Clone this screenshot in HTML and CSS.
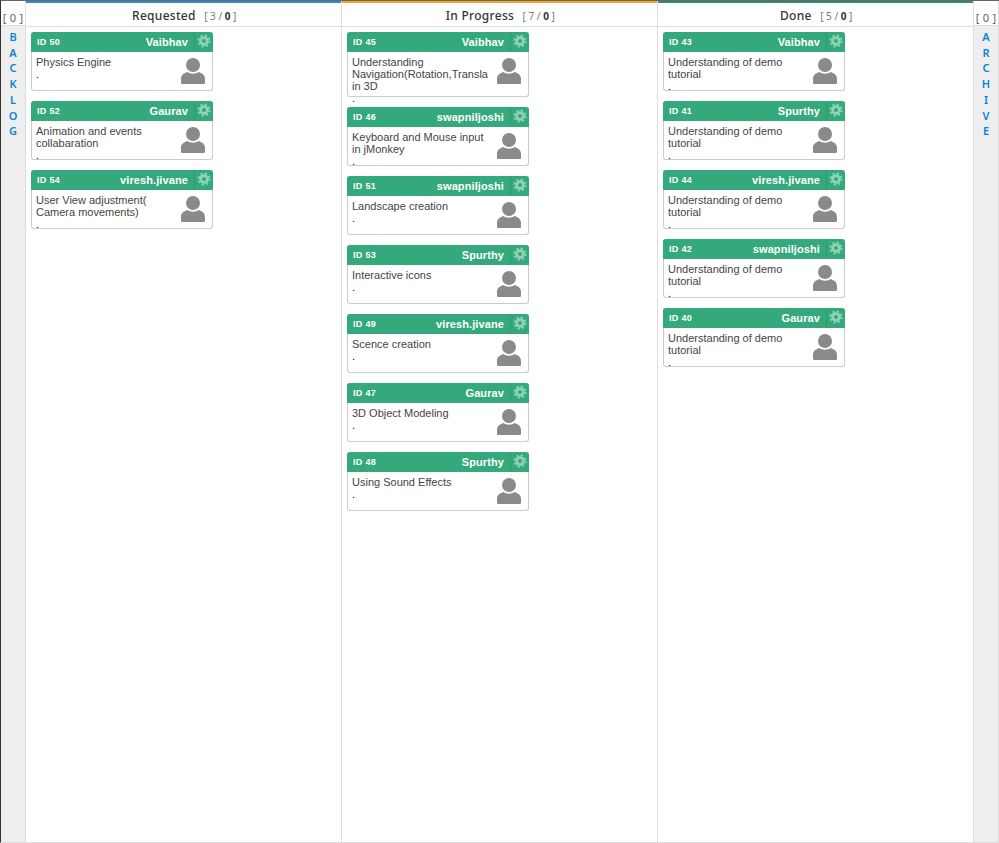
FILE: index.html
```html
<!DOCTYPE html>
<html>
<head>
    <title>Board</title>
    <link rel="stylesheet" href="styles.css">
</head>
<body>
    <svg class="defs" width="0" height="0">
        <symbol id="gear" viewBox="0 0 14 14">
            <circle cx="7" cy="7" r="3.4" fill="none" stroke="#8fd4b8" stroke-width="2.8"/>
            <circle cx="7" cy="7" r="5.6" fill="none" stroke="#8fd4b8" stroke-width="1.8" stroke-dasharray="2.2 2.2"/>
        </symbol>
        <symbol id="user" viewBox="0 0 24 26">
            <circle cx="12" cy="7" r="7" fill="#8a8a8a"/>
            <path d="M0 24.500v-4c0-3 2.500-5.200 6.500-6.500 2.500 2.300 8.500 2.300 11 0 4 1.300 6.500 3.500 6.500 6.500v4c0 1-.5 1.500-1.500 1.500h-21c-1 0-1.500-.5-1.500-1.500z" fill="#8a8a8a"/>
        </symbol>
    </svg>
    <div class="board">
        <div class="side">
            <div class="side-count">[ 0 ]</div>
            <a class="side-label">B A C K L O G</a>
        </div>

        <div class="lane">
            <div class="lane-head bar-blue">Requested <span class="count">[3/<b>0</b>]</span></div>
            <div class="lane-body">
                <div class="card">
                    <div class="card-head"><span class="id">ID 50</span><span class="name">Vaibhav</span><span class="cog"><svg><use href="#gear"/></svg></span></div>
                    <div class="card-body"><svg class="avatar"><use href="#user"/></svg><div class="title">Physics Engine</div><div class="note">.</div></div>
                </div>
                <div class="card">
                    <div class="card-head"><span class="id">ID 52</span><span class="name">Gaurav</span><span class="cog"><svg><use href="#gear"/></svg></span></div>
                    <div class="card-body"><svg class="avatar"><use href="#user"/></svg><div class="title">Animation and events collabaration</div><div class="note">.</div></div>
                </div>
                <div class="card">
                    <div class="card-head"><span class="id">ID 54</span><span class="name">viresh.jivane</span><span class="cog"><svg><use href="#gear"/></svg></span></div>
                    <div class="card-body"><svg class="avatar"><use href="#user"/></svg><div class="title">User View adjustment( Camera movements)</div><div class="note">.</div></div>
                </div>
            </div>
        </div>

        <div class="lane">
            <div class="lane-head bar-orange">In Progress <span class="count">[7/<b>0</b>]</span></div>
            <div class="lane-body">
                <div class="card">
                    <div class="card-head"><span class="id">ID 45</span><span class="name">Vaibhav</span><span class="cog"><svg><use href="#gear"/></svg></span></div>
                    <div class="card-body"><svg class="avatar"><use href="#user"/></svg><div class="title">Understanding Navigation(Rotation,Transla in 3D</div><div class="note">.</div></div>
                </div>
                <div class="card">
                    <div class="card-head"><span class="id">ID 46</span><span class="name">swapniljoshi</span><span class="cog"><svg><use href="#gear"/></svg></span></div>
                    <div class="card-body"><svg class="avatar"><use href="#user"/></svg><div class="title">Keyboard and Mouse input in jMonkey</div><div class="note">.</div></div>
                </div>
                <div class="card">
                    <div class="card-head"><span class="id">ID 51</span><span class="name">swapniljoshi</span><span class="cog"><svg><use href="#gear"/></svg></span></div>
                    <div class="card-body"><svg class="avatar"><use href="#user"/></svg><div class="title">Landscape creation</div><div class="note">.</div></div>
                </div>
                <div class="card">
                    <div class="card-head"><span class="id">ID 53</span><span class="name">Spurthy</span><span class="cog"><svg><use href="#gear"/></svg></span></div>
                    <div class="card-body"><svg class="avatar"><use href="#user"/></svg><div class="title">Interactive icons</div><div class="note">.</div></div>
                </div>
                <div class="card">
                    <div class="card-head"><span class="id">ID 49</span><span class="name">viresh.jivane</span><span class="cog"><svg><use href="#gear"/></svg></span></div>
                    <div class="card-body"><svg class="avatar"><use href="#user"/></svg><div class="title">Scence creation</div><div class="note">.</div></div>
                </div>
                <div class="card">
                    <div class="card-head"><span class="id">ID 47</span><span class="name">Gaurav</span><span class="cog"><svg><use href="#gear"/></svg></span></div>
                    <div class="card-body"><svg class="avatar"><use href="#user"/></svg><div class="title">3D Object Modeling</div><div class="note">.</div></div>
                </div>
                <div class="card">
                    <div class="card-head"><span class="id">ID 48</span><span class="name">Spurthy</span><span class="cog"><svg><use href="#gear"/></svg></span></div>
                    <div class="card-body"><svg class="avatar"><use href="#user"/></svg><div class="title">Using Sound Effects</div><div class="note">.</div></div>
                </div>
            </div>
        </div>

        <div class="lane">
            <div class="lane-head bar-green">Done <span class="count">[5/<b>0</b>]</span></div>
            <div class="lane-body">
                <div class="card">
                    <div class="card-head"><span class="id">ID 43</span><span class="name">Vaibhav</span><span class="cog"><svg><use href="#gear"/></svg></span></div>
                    <div class="card-body"><svg class="avatar"><use href="#user"/></svg><div class="title">Understanding of demo tutorial</div><div class="note">.</div></div>
                </div>
                <div class="card">
                    <div class="card-head"><span class="id">ID 41</span><span class="name">Spurthy</span><span class="cog"><svg><use href="#gear"/></svg></span></div>
                    <div class="card-body"><svg class="avatar"><use href="#user"/></svg><div class="title">Understanding of demo tutorial</div><div class="note">.</div></div>
                </div>
                <div class="card">
                    <div class="card-head"><span class="id">ID 44</span><span class="name">viresh.jivane</span><span class="cog"><svg><use href="#gear"/></svg></span></div>
                    <div class="card-body"><svg class="avatar"><use href="#user"/></svg><div class="title">Understanding of demo tutorial</div><div class="note">.</div></div>
                </div>
                <div class="card">
                    <div class="card-head"><span class="id">ID 42</span><span class="name">swapniljoshi</span><span class="cog"><svg><use href="#gear"/></svg></span></div>
                    <div class="card-body"><svg class="avatar"><use href="#user"/></svg><div class="title">Understanding of demo tutorial</div><div class="note">.</div></div>
                </div>
                <div class="card">
                    <div class="card-head"><span class="id">ID 40</span><span class="name">Gaurav</span><span class="cog"><svg><use href="#gear"/></svg></span></div>
                    <div class="card-body"><svg class="avatar"><use href="#user"/></svg><div class="title">Understanding of demo tutorial</div><div class="note">.</div></div>
                </div>
            </div>
        </div>

        <div class="side side-right">
            <div class="side-count">[ 0 ]</div>
            <a class="side-label">A R C H I V E</a>
        </div>
    </div>
</body>
</html>
```

FILE: styles.css
```css
html, body {
    margin: 0;
    padding: 0;
    height: 100%;
    background: #fff;
    overflow: hidden;
}
.defs {
    position: absolute;
}
.board {
    display: flex;
    width: 999px;
    height: 843px;
    box-sizing: border-box;
    border-top: 1px solid #666;
    border-left: 1px solid #333;
    border-bottom: 1px solid #ddd;
    font-family: "Liberation Sans", Arial, sans-serif;
}
.side {
    width: 25px;
    flex: none;
    background: #eee;
    border-right: 1px solid #ddd;
    box-sizing: border-box;
    text-align: center;
}
.side-right {
    border-left: 1px solid #ddd;
    width: 26px;
}
.side-count {
    height: 25px;
    box-sizing: border-box;
    padding-top: 10px;
    background: #fff;
    border-bottom: 1px solid #ddd;
    font: 11px/14px "Noto Sans", sans-serif;
    letter-spacing: 0.3px;
    color: #666;
    white-space: nowrap;
}
.side-label {
    display: block;
    width: 10px;
    margin: 3px auto 0;
    font: 600 11px/15.7px "Noto Sans", sans-serif;
    color: #0a84d6;
}
.lane {
    width: 316px;
    flex: none;
    box-sizing: border-box;
    border-right: 1px solid #ddd;
}
.lane:nth-of-type(4) {
    border-right: 0;
    width: 315px;
}
.lane-head {
    height: 26px;
    box-sizing: border-box;
    padding-left: 4px;
    border-top: 2px solid #2a8fcb;
    border-bottom: 1px solid #ddd;
    text-align: center;
    font: 500 12px/25px "Noto Sans", sans-serif;
    letter-spacing: 0.3px;
    color: #333;
}
.bar-blue {
    border-top-color: #2a8fcb;
}
.bar-orange {
    border-top-color: #f5a623;
}
.bar-green {
    border-top-color: #2f8f76;
}
.count {
    margin-left: 5px;
    font-size: 10px;
    font-weight: 400;
    letter-spacing: 2.6px;
    color: #777;
}
.count b {
    color: #333;
}
.lane-body {
    padding: 5px;
}
.card {
    width: 182px;
    margin-bottom: 10px;
    box-sizing: border-box;
    border: 1px solid #ccc;
    border-top: 0;
    border-radius: 3px;
    background: #fff;
}
.card-head {
    display: flex;
    align-items: center;
    height: 20px;
    margin: 0 -1px;
    background: #34a97b;
    border-radius: 3px 3px 0 0;
    color: #fff;
}
.id {
    margin-left: 6px;
    font-size: 9px;
    font-weight: bold;
    letter-spacing: 0.3px;
}
.name {
    flex: 1;
    text-align: right;
    padding-right: 6px;
    font-size: 11px;
    font-weight: bold;
    letter-spacing: 0.1px;
}
.cog {
    width: 19px;
    height: 20px;
    box-sizing: border-box;
    border-left: 1px solid #2f9a70;
    padding: 2px 0 0 2px;
}
.cog svg {
    display: block;
    width: 14px;
    height: 14px;
}
.card-body {
    min-height: 38px;
    box-sizing: border-box;
    padding: 4px 7px 4px 4px;
    font-size: 11px;
    line-height: 12px;
    color: #444;
}
.avatar {
    float: right;
    width: 24px;
    height: 26px;
    margin-top: 2px;
}
.title {
    width: 138px;
}
.note {
    height: 0;
    color: #000;
}
```
